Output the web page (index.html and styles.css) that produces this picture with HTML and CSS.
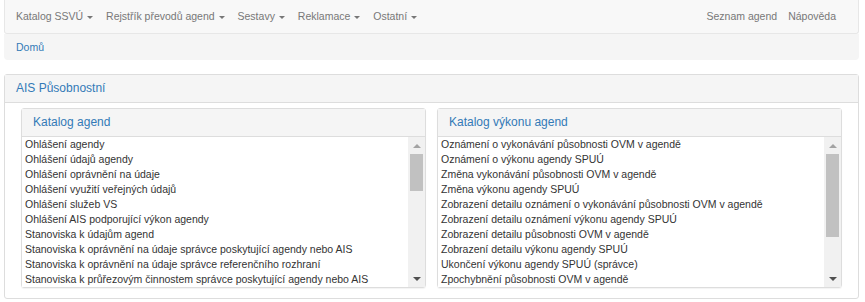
FILE: index.html
```html
<html>
<head>
    <meta charset="utf-8">
    <link rel="stylesheet" href="styles.css">
</head>
<body>
    <div id="page">
        <div id="navbar">
            <div class="navLeft">
                <a class="navLink" href="#">Katalog SSVÚ <span class="caret"></span></a>
                <a class="navLink" href="#">Rejstřík převodů agend <span class="caret"></span></a>
                <a class="navLink" href="#">Sestavy <span class="caret"></span></a>
                <a class="navLink" href="#">Reklamace <span class="caret"></span></a>
                <a class="navLink" href="#">Ostatní <span class="caret"></span></a>
            </div>
            <div class="navRight">
                <a class="navLink" href="#">Seznam agend</a>
                <a class="navLink" href="#">Nápověda</a>
            </div>
        </div>

        <div id="breadcrumb">
            <a href="#">Domů</a>
        </div>

        <div class="panel">
            <div class="panelHeading">AIS Působnostní</div>
            <div class="panelBody">
                <div class="subPanel">
                    <div class="subHeading">Katalog agend</div>
                    <div class="listBox">
                        <div class="listItems">
                            <div class="listItem">Ohlášení agendy</div>
                            <div class="listItem">Ohlášení údajů agendy</div>
                            <div class="listItem">Ohlášení oprávnění na údaje</div>
                            <div class="listItem">Ohlášení využití veřejných údajů</div>
                            <div class="listItem">Ohlášení služeb VS</div>
                            <div class="listItem">Ohlášení AIS podporující výkon agendy</div>
                            <div class="listItem">Stanoviska k údajům agend</div>
                            <div class="listItem">Stanoviska k oprávnění na údaje správce poskytující agendy nebo AIS</div>
                            <div class="listItem">Stanoviska k oprávnění na údaje správce referenčního rozhraní</div>
                            <div class="listItem">Stanoviska k průřezovým činnostem správce poskytující agendy nebo AIS</div>
                        </div>
                        <div class="scrollbar">
                            <div class="arrowUp"></div>
                            <div class="track"><div class="thumb thumbShort"></div></div>
                            <div class="arrowDown"></div>
                        </div>
                    </div>
                </div>

                <div class="subPanel">
                    <div class="subHeading">Katalog výkonu agend</div>
                    <div class="listBox">
                        <div class="listItems">
                            <div class="listItem">Oznámení o vykonávání působnosti OVM v agendě</div>
                            <div class="listItem">Oznámení o výkonu agendy SPUÚ</div>
                            <div class="listItem">Změna vykonávání působnosti OVM v agendě</div>
                            <div class="listItem">Změna výkonu agendy SPUÚ</div>
                            <div class="listItem">Zobrazení detailu oznámení o vykonávání působnosti OVM v agendě</div>
                            <div class="listItem">Zobrazení detailu oznámení výkonu agendy SPUÚ</div>
                            <div class="listItem">Zobrazení detailu působnosti OVM v agendě</div>
                            <div class="listItem">Zobrazení detailu výkonu agendy SPUÚ</div>
                            <div class="listItem">Ukončení výkonu agendy SPUÚ (správce)</div>
                            <div class="listItem">Zpochybnění působnosti OVM v agendě</div>
                        </div>
                        <div class="scrollbar">
                            <div class="arrowUp"></div>
                            <div class="track"><div class="thumb thumbLong"></div></div>
                            <div class="arrowDown"></div>
                        </div>
                    </div>
                </div>
            </div>
        </div>
    </div>
</body>
</html>
```

FILE: styles.css
```css
body {
    margin: 0;
    font-family: "Liberation Sans", Arial, sans-serif;
    font-size: 10.5px;
    color: #333333;
    background-color: #ffffff;
}

a {
    text-decoration: none;
}

#page {
    padding: 0 6px 0 4px;
}

#navbar {
    display: flex;
    justify-content: space-between;
    align-items: center;
    height: 33px;
    background-color: #f8f8f8;
    border: 1px solid #e7e7e7;
    border-top: none;
    border-radius: 0 0 3px 3px;
}

.navLeft, .navRight {
    display: flex;
    align-items: center;
}

.navLink {
    color: #777777;
    line-height: 15px;
}

.navLeft .navLink {
    padding: 0 6px 0 7px;
}

.navLeft .navLink:first-child {
    padding-left: 11px;
}

.navRight .navLink {
    padding: 0 11px 0 0;
}

.navRight .navLink:last-child {
    padding-right: 22px;
}

.caret {
    display: inline-block;
    width: 0;
    height: 0;
    margin-left: 1px;
    vertical-align: middle;
    border-top: 3px solid #777777;
    border-left: 3px solid transparent;
    border-right: 3px solid transparent;
}

#breadcrumb {
    height: 26px;
    line-height: 26px;
    background-color: #f5f5f5;
    border-radius: 0 0 4px 4px;
    padding: 0 12px;
}

#breadcrumb a {
    color: #337ab7;
}

.panel {
    margin-top: 14px;
    border: 1px solid #dddddd;
    border-radius: 3px;
}

.panelHeading {
    height: 27px;
    line-height: 27px;
    background-color: #f5f5f5;
    border-bottom: 1px solid #dddddd;
    padding: 0 11px;
    font-size: 12px;
    color: #337ab7;
}

.panelBody {
    display: grid;
    grid-template-columns: 1fr 1fr;
    column-gap: 11px;
    padding: 5px 16px 10px 16px;
}

.subPanel {
    border: 1px solid #dddddd;
    border-radius: 3px;
    box-shadow: 0 1px 1px rgba(0, 0, 0, 0.05);
}

.subHeading {
    height: 27px;
    line-height: 27px;
    background-color: #f5f5f5;
    border-bottom: 1px solid #dddddd;
    padding: 0 11px;
    font-size: 12px;
    color: #337ab7;
}

.listBox {
    display: flex;
    height: 150px;
    background-color: #ffffff;
}

.listItems {
    flex: 1;
    overflow: hidden;
    padding-left: 3px;
}

.listItem {
    line-height: 15px;
    white-space: nowrap;
}

.scrollbar {
    display: flex;
    flex-direction: column;
    width: 17px;
    background-color: #f1f1f1;
}

.arrowUp, .arrowDown {
    height: 17px;
    display: flex;
    align-items: center;
    justify-content: center;
}

.arrowUp::before {
    content: "";
    border-bottom: 4px solid #a3a3a3;
    border-left: 4px solid transparent;
    border-right: 4px solid transparent;
}

.arrowDown::before {
    content: "";
    border-top: 4px solid #505050;
    border-left: 4px solid transparent;
    border-right: 4px solid transparent;
}

.track {
    flex: 1;
    padding: 0 2px;
}

.thumb {
    background-color: #c1c1c1;
}

.thumbShort {
    height: 37px;
}

.thumbLong {
    height: 83px;
}
```
